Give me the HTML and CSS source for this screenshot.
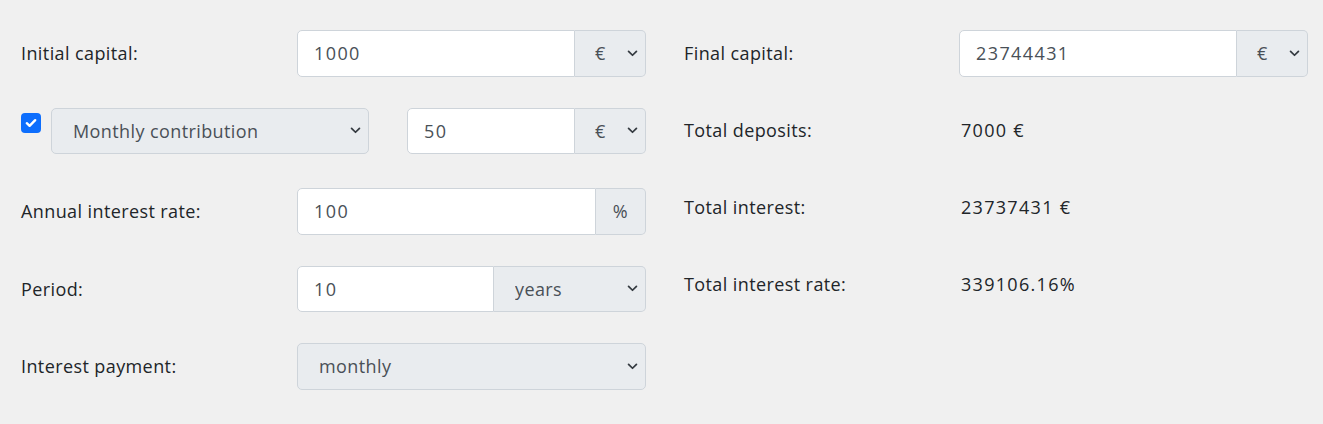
FILE: index.html
```html
<!DOCTYPE html>
<html lang="en">
<head>
<meta charset="utf-8">
<title>Compound interest calculator</title>
<link rel="stylesheet" href="styles.css">
</head>
<body>
<div class="calc">
  <div class="col">
    <div class="row">
      <label class="label">Initial capital:</label>
      <div class="group">
        <input class="input" type="text" value="1000">
        <select class="addon-select"><option>€</option></select>
      </div>
    </div>
    <div class="row row-contrib">
      <span class="check">
        <svg width="12" height="10" viewBox="0 0 12 10"><path d="M1.8 5.2 L4.6 7.8 L10.2 2.2" fill="none" stroke="#fff" stroke-width="2.4" stroke-linecap="round" stroke-linejoin="round"/></svg>
      </span>
      <select class="select contrib"><option>Monthly contribution</option></select>
      <div class="group small">
        <input class="input" type="text" value="50">
        <select class="addon-select"><option>€</option></select>
      </div>
    </div>
    <div class="row">
      <label class="label">Annual interest rate:</label>
      <div class="group">
        <input class="input" type="text" value="100">
        <span class="addon">%</span>
      </div>
    </div>
    <div class="row">
      <label class="label">Period:</label>
      <div class="group">
        <input class="input" type="text" value="10">
        <select class="addon-select wide"><option>years</option></select>
      </div>
    </div>
    <div class="row">
      <label class="label">Interest payment:</label>
      <select class="select full"><option>monthly</option></select>
    </div>
  </div>
  <div class="col right">
    <div class="row">
      <label class="label">Final capital:</label>
      <div class="group">
        <input class="input" type="text" value="23744431">
        <select class="addon-select"><option>€</option></select>
      </div>
    </div>
    <div class="row">
      <span class="label">Total deposits:</span>
      <span class="value">7000 €</span>
    </div>
    <div class="row">
      <span class="label">Total interest:</span>
      <span class="value">23737431 €</span>
    </div>
    <div class="row">
      <span class="label">Total interest rate:</span>
      <span class="value">339106.16%</span>
    </div>
  </div>
</div>
</body>
</html>
```

FILE: styles.css
```css
html, body {
  margin: 0;
  padding: 0;
  background: #f0f0f0;
}
body {
  font-family: "Open Sans", "Noto Sans", sans-serif;
  font-size: 18px;
  letter-spacing: 0.4px;
  color: #212529;
}
.calc {
  display: grid;
  grid-template-columns: 625px 624px;
  column-gap: 38px;
  padding: 30px 0 0 21px;
}
.col {
  display: flex;
  flex-direction: column;
  gap: 31px;
}
.col.right {
  gap: 30.5px;
}
.row {
  display: flex;
  align-items: center;
  height: 46.5px;
}
.row-contrib {
  margin-bottom: 3px;
}
.label {
  width: 276px;
  flex: none;
}
.right .label {
  width: 275px;
}
.value {
  padding-left: 2px;
  letter-spacing: 1.3px;
}
.group {
  display: flex;
  width: 349px;
  height: 46.5px;
  box-sizing: border-box;
}
.group.small {
  width: 239px;
  margin-left: 38px;
}
.input {
  flex: 1;
  min-width: 0;
  box-sizing: border-box;
  height: 46.5px;
  border: 1px solid #ced4da;
  border-radius: 5px 0 0 5px;
  background: #fff;
  font: inherit;
  letter-spacing: 1.4px;
  color: #495057;
  padding: 0 16px;
  margin: 0;
  outline: none;
}
.addon, .addon-select {
  flex: none;
  box-sizing: border-box;
  height: 46.5px;
  border: 1px solid #ced4da;
  border-left: none;
  border-radius: 0 5px 5px 0;
  background-color: #e9ecef;
  font: inherit;
  letter-spacing: inherit;
  color: #495057;
  margin: 0;
}
.addon {
  width: 50px;
  display: flex;
  align-items: center;
  justify-content: center;
}
.addon-select, .select {
  -webkit-appearance: none;
  appearance: none;
  background-image: url("data:image/svg+xml,%3Csvg xmlns='http://www.w3.org/2000/svg' width='12' height='8' viewBox='0 0 12 8'%3E%3Cpath d='M1.5 1.5 L6 6 L10.5 1.5' fill='none' stroke='%23343a40' stroke-width='2' stroke-linecap='round' stroke-linejoin='round'/%3E%3C/svg%3E");
  background-repeat: no-repeat;
  background-position: right 7px center;
  background-size: 11px 7px;
  outline: none;
}
.addon-select {
  width: 71px;
  padding: 0 0 0 20px;
}
.addon-select.wide {
  width: 152px;
  padding-left: 21px;
}
.select {
  box-sizing: border-box;
  height: 46px;
  border: 1px solid #ced4da;
  border-radius: 5px;
  background-color: #e9ecef;
  font: inherit;
  letter-spacing: inherit;
  color: #495057;
  padding: 0 0 0 21px;
  margin: 0;
}
.select.full {
  width: 349px;
  height: 46.5px;
}
.select.contrib {
  width: 318px;
  margin-left: 10px;
  padding-left: 21px;
}
.check {
  width: 20px;
  height: 20px;
  border-radius: 4px;
  background: #0d6efd;
  display: flex;
  align-items: center;
  justify-content: center;
  align-self: flex-start;
  margin-top: 5px;
  flex: none;
}
```
